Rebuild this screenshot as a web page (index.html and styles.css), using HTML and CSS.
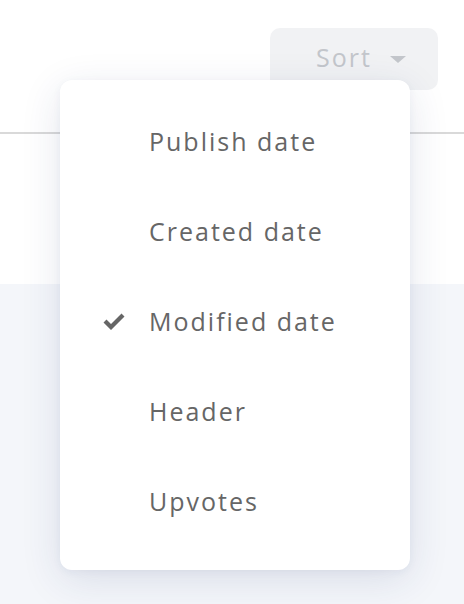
FILE: index.html
```html
<!DOCTYPE html>
<html>
<head>
<meta charset="utf-8">
<link rel="stylesheet" href="styles.css">
</head>
<body>
<div class="page">
  <header class="top">
    <div class="toolbar">
      <button class="sort-btn">Sort <span class="caret"></span></button>
    </div>
    <div class="sub"></div>
  </header>
  <main class="content"></main>
  <ul class="menu">
    <li class="item"><span class="check"></span><span>Publish date</span></li>
    <li class="item"><span class="check"></span><span>Created date</span></li>
    <li class="item selected"><span class="check"><svg width="24" height="20" viewBox="0 0 24 20"><path d="M1.5 11.5 L4.5 8.5 L9 13 L19.5 2.5 L22.5 5.5 L9 19 Z" fill="#666"/></svg></span><span>Modified date</span></li>
    <li class="item"><span class="check"></span><span>Header</span></li>
    <li class="item"><span class="check"></span><span>Upvotes</span></li>
  </ul>
</div>
</body>
</html>
```
FILE: styles.css
```css
* { box-sizing: border-box; }
html, body { margin: 0; padding: 0; }
body {
  width: 464px;
  height: 604px;
  overflow: hidden;
  font-family: "Open Sans", "Liberation Sans", sans-serif;
  background: #f4f6fa;
}
.page { position: relative; height: 604px; display: flex; flex-direction: column; }
.top { background: #fff; height: 284px; display: flex; flex-direction: column; }
.toolbar {
  height: 134px;
  border-bottom: 2px solid #d9d9d9;
  display: flex;
  justify-content: flex-end;
  align-items: flex-start;
  padding: 28px 26px 0 0;
}
.sort-btn {
  width: 168px;
  height: 62px;
  border: none;
  border-radius: 10px;
  background: #f1f2f4;
  color: #c3c6cb;
  font-family: inherit;
  font-size: 25px;
  letter-spacing: 2px;
  display: flex;
  align-items: center;
  justify-content: center;
  gap: 18px;
  padding: 0 0 4px 14px;
}
.caret {
  width: 0; height: 0;
  border-left: 8px solid transparent;
  border-right: 8px solid transparent;
  border-top: 7px solid #c3c6cb;
  margin-top: 4px;
}
.content { flex: 1; }
.menu {
  position: absolute;
  left: 60px;
  top: 80px;
  width: 350px;
  height: 490px;
  margin: 0;
  padding: 16px 0 24px;
  list-style: none;
  background: #fff;
  border-radius: 12px;
  box-shadow: 0 10px 40px rgba(30, 50, 110, 0.12), 0 2px 8px rgba(30, 50, 110, 0.05);
}
.item {
  height: 90px;
  display: flex;
  align-items: center;
  font-size: 25px;
  letter-spacing: 2px;
  color: #666;
  padding-left: 42px;
}
.check { width: 47px; display: flex; align-items: center; }
```
